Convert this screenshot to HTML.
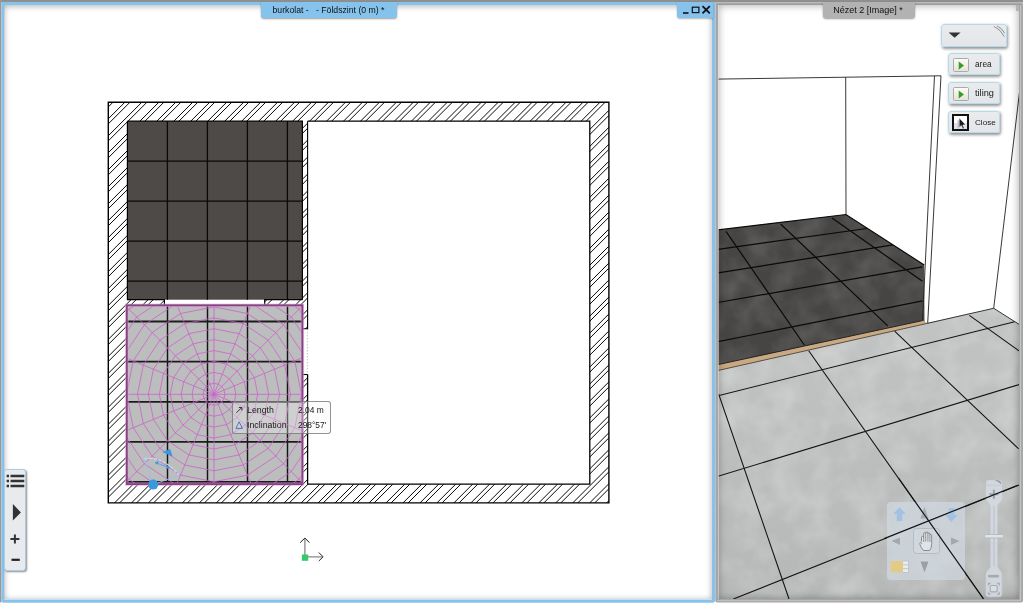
<!DOCTYPE html>
<html><head><meta charset="utf-8"><title>view</title>
<style>
html,body{margin:0;padding:0;}
body{width:1024px;height:604px;overflow:hidden;background:#fff;position:relative;font-family:"Liberation Sans",sans-serif;}
.abs{position:absolute;}
.tip{box-sizing:border-box;background:rgba(245,245,245,0.32);border:1px solid rgba(110,110,110,0.75);border-radius:3px;}
.tt{font-size:8.4px;line-height:10px;color:#1a1a1a;white-space:nowrap;will-change:transform;}
.bt{font-size:8.3px;line-height:11px;color:#1a1a1a;white-space:nowrap;will-change:transform;}
.ltool{box-sizing:content-box;background:#e8eaed;border:1px solid #a8cde6;border-radius:3px;box-shadow:1px 1px 2px rgba(0,0,0,0.45);}
.btn{box-sizing:content-box;background:linear-gradient(#e9ebed,#e3e6e9);border:1px solid #b4dbed;border-radius:3px;box-shadow:1px 1.5px 3px rgba(0,0,0,0.42);}
.ico{width:13.2px;height:12.2px;background:linear-gradient(#fbfbf8,#e6e4d6);border:1px solid #aaa;border-radius:1.5px;}
.icoc{width:13.4px;height:13.1px;background:linear-gradient(#fff 0,#fff 52%,#dde3ee 52%,#dde3ee 100%);border:2.2px solid #111;}
.navp{background:rgba(210,222,231,0.6);border-radius:4px;}
.tab{font-size:8.7px;line-height:11px;color:#111;text-align:center;white-space:nowrap;will-change:transform;}
</style></head><body>
<!-- frames -->
<svg class="abs" style="left:0;top:0" width="1024" height="604" viewBox="0 0 1024 604">
<rect x="0" y="0" width="1023" height="2.1" fill="#8f8f8f"/>
<rect x="0" y="0" width="1.5" height="602.4" fill="#989898"/>
<path fill="#86c3ec" fill-rule="evenodd" d="M1.6 2H715V600.7Q715 602.7 713 602.7H3.6Q1.6 602.7 1.6 600.7Z M4.2 5H712V599.6H4.2Z"/>
<path fill="#a6a6a6" fill-rule="evenodd" d="M715.3 2H1023V600.4Q1023 602.4 1021 602.4H717.3Q715.3 602.4 715.3 600.4Z M718 4.7H1019V598.8H718Z"/>
<rect x="715.3" y="2" width="307.7" height="1.7" fill="#b9bbbb"/>
<rect x="716.5" y="3.7" width="305" height="1" fill="#909090"/>
<path d="M1020.6 5V600.7H717" stroke="#c6c6c6" stroke-width="1" fill="none"/>
</svg>

<svg class="abs" style="left:718px;top:4.7px" width="301" height="594.1" viewBox="718 4.7 301 594.1">
<defs>
<filter id="noiseL" x="0" y="0" width="100%" height="100%"><feTurbulence type="fractalNoise" baseFrequency="0.035" numOctaves="3" seed="4" result="n"/><feColorMatrix in="n" type="matrix" values="0 0 0 0 1  0 0 0 0 1  0 0 0 0 1  0.45 0 0 0 -0.16"/><feComposite operator="in" in2="SourceGraphic"/></filter>
<filter id="noiseD" x="0" y="0" width="100%" height="100%"><feTurbulence type="fractalNoise" baseFrequency="0.04" numOctaves="3" seed="9" result="n"/><feColorMatrix in="n" type="matrix" values="0 0 0 0 1  0 0 0 0 1  0 0 0 0 1  0.22 0 0 0 -0.07"/><feComposite operator="in" in2="SourceGraphic"/></filter>
<linearGradient id="gl" x1="0" y1="0" x2="0" y2="1"><stop offset="0" stop-color="#c2c4c4"/><stop offset="1" stop-color="#b6b8b8"/></linearGradient>
</defs>
<rect x="718" y="4" width="302" height="596" fill="#fff"/>
<!-- dark floor -->
<path id="dk" d="M718 229.6L846 214.2L924.2 264.7L924.5 322L718 367Z" fill="#474544"/>
<path d="M718 229.6L846 214.2L924.2 264.7L924.5 322L718 367Z" fill="#fff" filter="url(#noiseD)"/>
<path d="M726 231L804.3 344.7M780.6 223.7L887.7 325.6M832 217.8L922.5 281M718 249.1L866.8 228.2M718 272.6L893 244.6M718 302.2L922.5 266.5M718 341.4L922.5 300.5M718 229.6L846 214.2L924.2 264.7" stroke="#0a0a0a" stroke-width="1.2" fill="none"/>
<!-- light floor -->
<path d="M718 369L927.7 322.5L993.7 308L1019 324V599H718Z" fill="url(#gl)"/>
<path d="M718 369L927.7 322.5L993.7 308L1019 324V599H718Z" fill="#fff" filter="url(#noiseL)"/>
<path d="M808.7 350.4L983.5 598.7M894.6 330.8L1018.7 448.6M969.4 315.1L1019 350.6M718.6 393.6L789 598.7M718 395.4L1014.6 321.4M718 476L1019 384.3M733.4 598.7L1018.7 484.9" stroke="#141414" stroke-width="1.1" fill="none"/>
<!-- threshold -->
<path d="M718 364.3L922.5 320.3L927.7 323L718 370.2Z" fill="#c8a983"/><path d="M718 364.3L922.5 320.3" stroke="#1c1a18" stroke-width="0.9" fill="none"/><path d="M718 370.2L927.7 323" stroke="#3a332c" stroke-width="0.8" fill="none"/>
<!-- walls lines -->
<path d="M718 78.8L941 75.5M845.7 76.8L846 214M934.5 75.6L922.5 320.3M941 75.5L927.7 323M927.7 323L993.7 308L1019 324M1019.5 92L993.7 308" stroke="#222" stroke-width="0.9" fill="none"/>
</svg>

<div class="abs" style="left:718px;top:4.7px;width:301px;height:594.1px;box-shadow:inset 0 0 8px rgba(0,0,0,0.36);pointer-events:none"></div>
<div class="abs" style="left:718.2px;top:5px;width:1px;height:594px;background:rgba(225,225,225,0.6)"></div>
<div class="abs" style="left:1016.2px;top:4.7px;width:2.8px;height:6.5px;background:#b4b4b4"></div>

<svg class="abs" style="left:0;top:0" width="716" height="604" viewBox="0 0 716 604">
<defs>
<clipPath id="wallclip"><path clip-rule="evenodd" d="M108.3 102.3H608.9V502.9H108.3Z M127.4 121.2V299.7H164.4V305.3H127.4V484.2H589.8V121.2H307.6V328.7H302.4V121.2Z M264.7 299.7H302.4V305.3H264.7Z M302.4 374.5H307.6V484.2H302.4Z"/></clipPath>
<clipPath id="roomclip"><rect x="127.4" y="305.3" width="175" height="178.9"/></clipPath>
</defs>
<!-- dark tiles -->
<rect x="127.4" y="121.2" width="175" height="178.5" fill="#4d4a48"/>
<path d="M167.4 121.2V299.7M207.4 121.2V299.7M247.4 121.2V299.7M287.4 121.2V299.7M127.4 161.2H302.4M127.4 201.2H302.4M127.4 241.2H302.4M127.4 281.2H302.4" stroke="#0a0a0a" stroke-width="1.3" fill="none"/>
<!-- light tiles -->
<rect x="127.4" y="305.3" width="175" height="178.9" fill="#bcbdbd"/>
<path d="M167.5 305.3V484.2M207.5 305.3V484.2M247.5 305.3V484.2M287.5 305.3V484.2" stroke="#141414" stroke-width="1.45" fill="none"/>
<path d="M127.4 321.5H302.4M127.4 361.6H302.4M127.4 401.8H302.4M127.4 441.9H302.4M127.4 482H302.4" stroke="#1c1c1c" stroke-width="1.8" fill="none"/>
<!-- hatch -->
<g clip-path="url(#wallclip)"><path d="M98.16 95.00L-316.84 510.00M115.13 95.00L-299.87 510.00M132.10 95.00L-282.90 510.00M149.07 95.00L-265.93 510.00M166.04 95.00L-248.96 510.00M183.01 95.00L-231.99 510.00M199.98 95.00L-215.02 510.00M216.95 95.00L-198.05 510.00M233.92 95.00L-181.08 510.00M250.89 95.00L-164.11 510.00M267.86 95.00L-147.14 510.00M284.83 95.00L-130.17 510.00M301.80 95.00L-113.20 510.00M318.77 95.00L-96.23 510.00M335.74 95.00L-79.26 510.00M352.71 95.00L-62.29 510.00M369.68 95.00L-45.32 510.00M386.65 95.00L-28.35 510.00M403.62 95.00L-11.38 510.00M420.59 95.00L5.59 510.00M437.56 95.00L22.56 510.00M454.53 95.00L39.53 510.00M471.50 95.00L56.50 510.00M488.47 95.00L73.47 510.00M505.44 95.00L90.44 510.00M522.41 95.00L107.41 510.00M539.38 95.00L124.38 510.00M556.35 95.00L141.35 510.00M573.32 95.00L158.32 510.00M590.29 95.00L175.29 510.00M607.26 95.00L192.26 510.00M624.23 95.00L209.23 510.00M641.20 95.00L226.20 510.00M658.17 95.00L243.17 510.00M675.14 95.00L260.14 510.00M692.11 95.00L277.11 510.00M709.08 95.00L294.08 510.00M726.05 95.00L311.05 510.00M743.02 95.00L328.02 510.00M759.99 95.00L344.99 510.00M776.96 95.00L361.96 510.00M793.93 95.00L378.93 510.00M810.90 95.00L395.90 510.00M827.87 95.00L412.87 510.00M844.84 95.00L429.84 510.00M861.81 95.00L446.81 510.00M878.78 95.00L463.78 510.00M895.75 95.00L480.75 510.00M912.72 95.00L497.72 510.00M929.69 95.00L514.69 510.00M946.66 95.00L531.66 510.00M963.63 95.00L548.63 510.00M980.60 95.00L565.60 510.00M997.57 95.00L582.57 510.00M1014.54 95.00L599.54 510.00M1031.51 95.00L616.51 510.00M1048.48 95.00L633.48 510.00M86.29 95.00L-328.71 510.00M103.26 95.00L-311.74 510.00M120.23 95.00L-294.77 510.00M137.20 95.00L-277.80 510.00M154.17 95.00L-260.83 510.00M171.14 95.00L-243.86 510.00M188.11 95.00L-226.89 510.00M205.08 95.00L-209.92 510.00M222.05 95.00L-192.95 510.00M239.02 95.00L-175.98 510.00M255.99 95.00L-159.01 510.00M272.96 95.00L-142.04 510.00M289.93 95.00L-125.07 510.00M306.90 95.00L-108.10 510.00M323.87 95.00L-91.13 510.00M340.84 95.00L-74.16 510.00M357.81 95.00L-57.19 510.00M374.78 95.00L-40.22 510.00M391.75 95.00L-23.25 510.00M408.72 95.00L-6.28 510.00M425.69 95.00L10.69 510.00M442.66 95.00L27.66 510.00M459.63 95.00L44.63 510.00M476.60 95.00L61.60 510.00M493.57 95.00L78.57 510.00M510.54 95.00L95.54 510.00M527.51 95.00L112.51 510.00M544.48 95.00L129.48 510.00M561.45 95.00L146.45 510.00M578.42 95.00L163.42 510.00M595.39 95.00L180.39 510.00M612.36 95.00L197.36 510.00M629.33 95.00L214.33 510.00M646.30 95.00L231.30 510.00M663.27 95.00L248.27 510.00M680.24 95.00L265.24 510.00M697.21 95.00L282.21 510.00M714.18 95.00L299.18 510.00M731.15 95.00L316.15 510.00M748.12 95.00L333.12 510.00M765.09 95.00L350.09 510.00M782.06 95.00L367.06 510.00M799.03 95.00L384.03 510.00M816.00 95.00L401.00 510.00M832.97 95.00L417.97 510.00M849.94 95.00L434.94 510.00M866.91 95.00L451.91 510.00M883.88 95.00L468.88 510.00M900.85 95.00L485.85 510.00M917.82 95.00L502.82 510.00M934.79 95.00L519.79 510.00M951.76 95.00L536.76 510.00M968.73 95.00L553.73 510.00M985.70 95.00L570.70 510.00M1002.67 95.00L587.67 510.00M1019.64 95.00L604.64 510.00M1036.61 95.00L621.61 510.00" stroke="#0a0a0a" stroke-width="1.0" fill="none"/></g>
<!-- wall outlines -->
<path d="M108.3 102.3H608.9V502.9H108.3Z" stroke="#000" stroke-width="1.4" fill="none"/>
<path d="M307.6 121.2H589.8V484.2H307.6V374.5" stroke="#000" stroke-width="1.3" fill="none"/>
<path d="M307.6 121.2V328.7H302.4" stroke="#000" stroke-width="1.1" fill="none"/>
<path d="M302.4 374.5H307.6" stroke="#000" stroke-width="1.1" fill="none"/>
<path d="M127.4 121.2H302.4V299.7M127.4 121.2V299.7H164.4V305.3M264.7 305.3V299.7H302.4" stroke="#000" stroke-width="1.2" fill="none"/>
<path d="M307.3 329V374" stroke="#999" stroke-width="0.6" stroke-dasharray="1.5 1.5" fill="none"/>
<!-- web -->
<g clip-path="url(#roomclip)"><path d="M214.00 394.30L414.00 394.30M214.00 394.30L398.78 470.84M214.00 394.30L355.42 535.72M214.00 394.30L290.54 579.08M214.00 394.30L214.00 594.30M214.00 394.30L137.46 579.08M214.00 394.30L72.58 535.72M214.00 394.30L29.22 470.84M214.00 394.30L14.00 394.30M214.00 394.30L29.22 317.76M214.00 394.30L72.58 252.88M214.00 394.30L137.46 209.52M214.00 394.30L214.00 194.30M214.00 394.30L290.54 209.52M214.00 394.30L355.42 252.88M214.00 394.30L398.78 317.76M224.93 394.30L224.10 398.48L221.73 402.03L218.18 404.40L214.00 405.23L209.82 404.40L206.27 402.03L203.90 398.48L203.07 394.30L203.90 390.12L206.27 386.57L209.82 384.20L214.00 383.37L218.18 384.20L221.73 386.57L224.10 390.12ZM235.86 394.30L234.20 402.67L229.46 409.76L222.37 414.50L214.00 416.16L205.63 414.50L198.54 409.76L193.80 402.67L192.14 394.30L193.80 385.93L198.54 378.84L205.63 374.10L214.00 372.44L222.37 374.10L229.46 378.84L234.20 385.93ZM246.79 394.30L244.29 406.85L237.19 417.49L226.55 424.59L214.00 427.09L201.45 424.59L190.81 417.49L183.71 406.85L181.21 394.30L183.71 381.75L190.81 371.11L201.45 364.01L214.00 361.51L226.55 364.01L237.19 371.11L244.29 381.75ZM257.72 394.30L254.39 411.03L244.91 425.21L230.73 434.69L214.00 438.02L197.27 434.69L183.09 425.21L173.61 411.03L170.28 394.30L173.61 377.57L183.09 363.39L197.27 353.91L214.00 350.58L230.73 353.91L244.91 363.39L254.39 377.57ZM268.65 394.30L264.49 415.21L252.64 432.94L234.91 444.79L214.00 448.95L193.09 444.79L175.36 432.94L163.51 415.21L159.35 394.30L163.51 373.39L175.36 355.66L193.09 343.81L214.00 339.65L234.91 343.81L252.64 355.66L264.49 373.39ZM279.58 394.30L274.59 419.40L260.37 440.67L239.10 454.89L214.00 459.88L188.90 454.89L167.63 440.67L153.41 419.40L148.42 394.30L153.41 369.20L167.63 347.93L188.90 333.71L214.00 328.72L239.10 333.71L260.37 347.93L274.59 369.20ZM290.51 394.30L284.69 423.58L268.10 448.40L243.28 464.99L214.00 470.81L184.72 464.99L159.90 448.40L143.31 423.58L137.49 394.30L143.31 365.02L159.90 340.20L184.72 323.61L214.00 317.79L243.28 323.61L268.10 340.20L284.69 365.02ZM301.44 394.30L294.78 427.76L275.83 456.13L247.46 475.08L214.00 481.74L180.54 475.08L152.17 456.13L133.22 427.76L126.56 394.30L133.22 360.84L152.17 332.47L180.54 313.52L214.00 306.86L247.46 313.52L275.83 332.47L294.78 360.84ZM312.37 394.30L304.88 431.94L283.56 463.86L251.64 485.18L214.00 492.67L176.36 485.18L144.44 463.86L123.12 431.94L115.63 394.30L123.12 356.66L144.44 324.74L176.36 303.42L214.00 295.93L251.64 303.42L283.56 324.74L304.88 356.66ZM323.30 394.30L314.98 436.13L291.29 471.59L255.83 495.28L214.00 503.60L172.17 495.28L136.71 471.59L113.02 436.13L104.70 394.30L113.02 352.47L136.71 317.01L172.17 293.32L214.00 285.00L255.83 293.32L291.29 317.01L314.98 352.47ZM334.23 394.30L325.08 440.31L299.02 479.32L260.01 505.38L214.00 514.53L167.99 505.38L128.98 479.32L102.92 440.31L93.77 394.30L102.92 348.29L128.98 309.28L167.99 283.22L214.00 274.07L260.01 283.22L299.02 309.28L325.08 348.29ZM345.16 394.30L335.18 444.49L306.74 487.04L264.19 515.48L214.00 525.46L163.81 515.48L121.26 487.04L92.82 444.49L82.84 394.30L92.82 344.11L121.26 301.56L163.81 273.12L214.00 263.14L264.19 273.12L306.74 301.56L335.18 344.11ZM356.09 394.30L345.27 448.68L314.47 494.77L268.38 525.57L214.00 536.39L159.62 525.57L113.53 494.77L82.73 448.68L71.91 394.30L82.73 339.92L113.53 293.83L159.62 263.03L214.00 252.21L268.38 263.03L314.47 293.83L345.27 339.92Z" stroke="#cc5fcc" stroke-opacity="0.85" stroke-width="0.9" fill="none"/></g>
<!-- selection -->
<rect x="126.8" y="305.3" width="175.6" height="178.8" fill="none" stroke="#e9a6ea" stroke-width="3.6" stroke-opacity="0.55"/>
<rect x="126.8" y="305.3" width="175.6" height="178.8" fill="none" stroke="#85437f" stroke-width="1.9"/>
<!-- rotate gizmo -->
<path d="M153.2 484.6L144.1 458.7M153.2 484.6L179.2 475.1" stroke="#8fc6ef" stroke-width="0.85" fill="none"/>
<path d="M144.3 458.9Q162.3 455.4 179 475" stroke="#c6e0f6" stroke-width="1.1" stroke-dasharray="3.5 1.2" fill="none"/>
<path d="M156.5 463.1L168.4 467.5" stroke="#5aaae8" stroke-width="1.1" fill="none"/>
<path d="M155.2 462.6l3-.9-.9 2.5zM169.5 467.9l-3.1.7 1-2.6z" fill="#3a98dd" stroke="#3a98dd" stroke-width="0.8"/>
<path d="M162.3 452.1L170.1 448.9L172.8 456.8Z" fill="#3a98dd"/>
<circle cx="153.2" cy="484.6" r="5" fill="#3a98dd"/>
<!-- origin -->
<path d="M304.9 538.5V555M308 556.8H322.6" stroke="#888" stroke-width="1.3" fill="none"/>
<path d="M300.2 542.6L304.9 538L309.4 542.6M318.8 552.5L323.1 556.8L318.8 561" stroke="#222" stroke-width="1" fill="none"/>
<rect x="301.9" y="554.5" width="6.3" height="6.3" fill="#2ecc6a"/>
</svg>

<div class="abs" style="left:4.3px;top:5px;width:707.7px;height:594.4px;box-shadow:inset 0 1px 6px rgba(0,0,0,0.33);pointer-events:none"></div>

<div class="abs tip" style="left:232px;top:401.3px;width:99px;height:32.6px"></div>
<svg class="abs" style="left:232px;top:401px" width="100" height="34" viewBox="232 401 100 34">
<path d="M236.3 412.8L241.6 407.7M238.8 407.5H241.9V410.5" stroke="#222" stroke-width="0.9" fill="none"/>
<path d="M235.9 428.4L239.1 421.8L242.5 428.4Z" stroke="#3b6fc4" stroke-width="0.9" fill="none"/>
</svg>
<div class="abs tt" style="left:247px;top:405px;font-size:8.8px">Length</div>
<div class="abs tt" style="left:297.5px;top:405px">2.04 m</div>
<div class="abs tt" style="left:247px;top:419.5px;font-size:8.8px">Inclination</div>
<div class="abs tt" style="left:297.5px;top:419.5px">298°57'</div>


<div class="abs ltool" style="left:4px;top:468.6px;width:20.3px;height:100.4px"></div>
<svg class="abs" style="left:0;top:460px" width="40" height="120" viewBox="0 460 40 120">
<path d="M10.5 476H24.3M10.5 481H24.3M10.5 486H24.3" stroke="#333" stroke-width="2.4"/>
<path d="M6.6 476H9M6.6 481H9M6.6 486H9" stroke="#333" stroke-width="2.4"/>
<path d="M12.9 504.1L20.9 512.4L12.9 520.6Z" fill="#333"/>
<path d="M10.4 538.9H19.4M14.9 534.4V543.4" stroke="#333" stroke-width="2"/>
<path d="M11.5 559.8H19.8" stroke="#222" stroke-width="2.2"/>
</svg>

<!-- tabs -->
<div class="abs" style="left:261.3px;top:2px;width:136.2px;height:16px;background:#86c3ec;border-radius:0 0 3px 3px;box-shadow:0 1px 2px rgba(0,0,0,0.4)"></div>
<div class="abs tab" style="left:261.5px;top:5px;width:133px">burkolat -&nbsp;&nbsp; - Földszint (0 m) *</div>
<div class="abs" style="left:677px;top:2px;width:36px;height:16px;background:#86c3ec;border-radius:0 0 0 3px;box-shadow:0 1px 2px rgba(0,0,0,0.3)"></div>
<svg class="abs" style="left:677px;top:2px" width="36" height="16" viewBox="677 2 36 16">
<path d="M683 13H688.5" stroke="#111" stroke-width="1.6"/>
<rect x="692.3" y="7.2" width="6.6" height="5.4" fill="none" stroke="#111" stroke-width="1.2"/>
<path d="M702.5 6.2L709.8 13.3M709.8 6.2L702.5 13.3" stroke="#111" stroke-width="1.8"/>
</svg>
<div class="abs" style="left:823.1px;top:2px;width:92.3px;height:16.2px;background:#b2b2b2;border-radius:0 0 3px 3px;box-shadow:0 1px 2px rgba(0,0,0,0.4)"></div>
<div class="abs tab" style="left:821.6px;top:5px;width:92px;font-size:9px">Nézet 2 [Image] *</div>

<div class="abs btn" style="left:940.8px;top:24.4px;width:64px;height:20.6px"></div>
<svg class="abs" style="left:941px;top:24px" width="67" height="24" viewBox="941 24 67 24">
<path d="M948.6 32.6H960.6L954.6 37.8Z" fill="#333"/>
<path d="M993.8 26.3Q1001 29.5 1004.2 36.6M997 25.9Q1002.3 28.3 1004.6 33.2" stroke="#666" stroke-width="0.7" fill="none"/>
</svg>
<div class="abs btn" style="left:948.3px;top:52.9px;width:49.6px;height:20.4px"></div>
<div class="abs btn" style="left:948.3px;top:81.8px;width:49.6px;height:20.4px"></div>
<div class="abs btn" style="left:948.3px;top:110.8px;width:49.6px;height:20.4px"></div>
<div class="abs ico" style="left:953.4px;top:58.2px"></div>
<div class="abs ico" style="left:953.4px;top:87.1px"></div>
<div class="abs icoc" style="left:951.9px;top:114.2px"></div>
<svg class="abs" style="left:950px;top:55px" width="24" height="80" viewBox="950 55 24 80">
<path d="M958.7 61.5L964 65.6L958.7 69.7Z" fill="#3a9a2a"/>
<path d="M958.7 90.4L964 94.5L958.7 98.6Z" fill="#3a9a2a"/>
<path d="M959.2 118V127.4L961.3 125.5L962.9 128.9L964.3 128.3L962.8 125L965.6 124.7Z" fill="#1a1a1a" stroke="#fff" stroke-width="0.5"/>
<path d="M958.2 120.2V128.4" stroke="#b5b5b5" stroke-width="1.2" fill="none"/>
</svg>
<div class="abs bt" style="left:974.5px;top:58.6px">area</div>
<div class="abs bt" style="left:974.5px;top:87.6px;font-size:9.2px">tiling</div>
<div class="abs bt" style="left:974.5px;top:116.6px;font-size:8.1px">Close</div>


<div class="abs navp" style="left:887px;top:502px;width:78px;height:78px"></div>
<svg class="abs" style="left:880px;top:476px" width="140" height="124" viewBox="880 476 140 124">
<!-- slider -->
<path d="M986 482.5Q986 480 988.5 480H999.7Q1002.2 480 1002.2 482.5V498Q1002.2 500.5 1000 502L997.5 505V567.3L1000 570.5Q1001.8 572 1001.8 574.5V594.3Q1001.8 596.8 999.3 596.8H988.4Q985.9 596.8 985.9 594.3V574.5Q985.9 572 987.8 570.5L990.5 567.3V505L988 502Q986 500.5 986 498Z" fill="#d5dde3" fill-opacity="0.82" stroke="#c3ccd2" stroke-opacity="0.6" stroke-width="0.6"/>
<path d="M994.5 480.3L998.5 480.3Q1001.6 481.4 1001.2 484.2Q998.5 481.6 994.5 480.3Z" fill="#8a8f94" fill-opacity="0.85"/>
<path d="M986.8 485.4H1001.6" stroke="#bcc5cb" stroke-width="0.7" stroke-opacity="0.8"/>
<path d="M994 506V566.5" stroke="#b3bbc1" stroke-width="1" stroke-opacity="0.8"/>
<path d="M989.4 494.2H998.4M993.9 489.7V498.7" stroke="#8f9397" stroke-width="2" stroke-opacity="0.8"/>
<rect x="988.2" y="574.9" width="10.6" height="2.6" fill="#a6aaae"/>
<rect x="984.5" y="534.5" width="19" height="3.4" rx="1.2" fill="#dfe4e7" stroke="#aab2b8" stroke-width="0.7"/>
<rect x="990.2" y="585.5" width="7" height="6.4" rx="1.2" fill="#dde3e8" fill-opacity="0.6" stroke="#a4aaaf" stroke-width="1.1"/>
<path d="M987.9 582.8h3.2l-3.2 3.2zM999.8 582.8h-3.2l3.2 3.2zM987.9 594.8h3.2l-3.2-3.2zM999.8 594.8h-3.2l3.2-3.2z" fill="#a4aaaf"/>
<!-- nav arrows -->
<path d="M899.5 507L905.8 514H902.3V521H896.7V514H893.2Z" fill="#a3c2e3"/>
<path d="M951.5 522L957.8 515H954.3V508H948.7V515H945.2Z" fill="#a3c2e3"/>
<path d="M924.5 507L928.5 518.5H920.5Z" fill="#a4aaae"/>
<path d="M924.5 572.5L928.5 561.5H920.5Z" fill="#9aa0a5"/>
<path d="M891.5 541L900 537.5V545Z" fill="#a2a8ac"/>
<path d="M959.5 541L951 537.5V545Z" fill="#a2a8ac"/>
<rect x="913.5" y="528.5" width="26" height="25" rx="3" fill="#d6dee3" fill-opacity="0.5" stroke="#aeb6bb" stroke-width="0.8"/>
<path d="M921.5 541.5V537.5Q921.5 536.3 922.6 536.3T923.7 537.5V533.6Q923.7 532.6 924.7 532.6T925.7 533.6V533Q925.7 532 926.8 532T927.9 533V533.8Q927.9 532.9 928.9 532.9T929.9 533.8V535.2Q929.9 534.5 930.8 534.5T931.7 535.4V543.5Q931.7 548.5 929.5 550.5H923.5Q921 548 920 544.5Q919.5 543 920.4 542.6Q921.2 542.3 921.8 543.6" fill="#e4e9ec" fill-opacity="0.7" stroke="#777" stroke-width="0.8"/>
<path d="M923.7 537.5V542M925.7 533.6V541.5M927.9 533.8V541.5M929.9 535.2V542" stroke="#777" stroke-width="0.7"/>
<rect x="890.8" y="561" width="12.2" height="11.5" fill="#e2cb84"/>
<path d="M903 561H908.6V572.5H903M903 564.8H908.6M903 568.6H908.6" stroke="#b9bec2" stroke-width="0.8" fill="#e8ecee"/>
</svg>

<svg class="abs" style="left:884px;top:478px" width="135" height="121" viewBox="884 478 135 121">
<path d="M808.7 350.4L983.5 598.7M733.4 598.7L1018.7 484.9" stroke="#141414" stroke-width="1.1" fill="none"/>
</svg>

</body></html>
